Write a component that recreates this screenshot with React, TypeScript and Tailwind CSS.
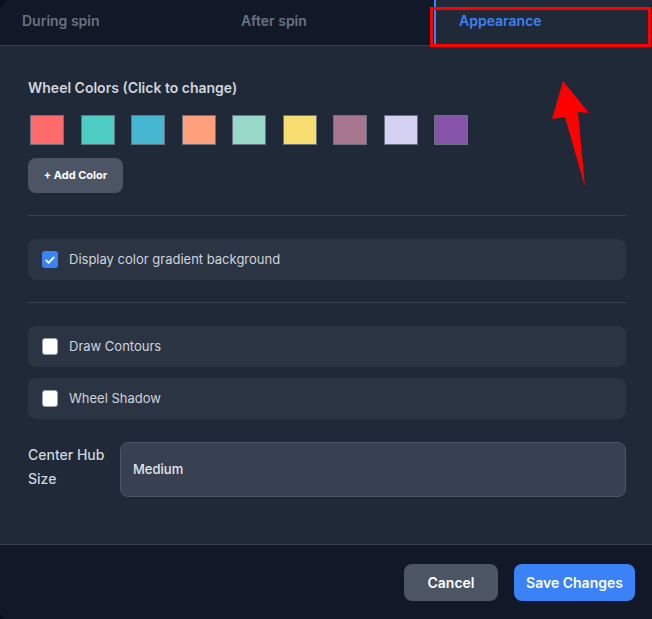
import React, { useState } from "react";

const colors = [
  "#ff6b6b",
  "#4ecdc4",
  "#45b7d1",
  "#ffa07a",
  "#98d8c8",
  "#f7dc6f",
  "#a8758f",
  "#d4d1f2",
  "#8553a8",
];

const CheckRow = ({
  label,
  checked,
  onChange,
}: {
  label: string;
  checked: boolean;
  onChange: () => void;
}) => (
  <label className="flex h-[41px] items-center gap-[11px] rounded-lg bg-[#2b3443] px-[14px] cursor-pointer">
    <span
      onClick={onChange}
      className={`flex h-[17px] w-4 items-center justify-center rounded-[3px] ${
        checked ? "bg-[#3b82f6]" : "bg-white border border-gray-400"
      }`}
    >
      {checked && (
        <svg viewBox="0 0 16 16" className="h-3 w-3" fill="none">
          <path
            d="M3 8.5l3.2 3.2L13 4.5"
            stroke="white"
            strokeWidth="2.4"
            strokeLinecap="round"
            strokeLinejoin="round"
          />
        </svg>
      )}
    </span>
    <span className="text-[13px] text-gray-300">{label}</span>
  </label>
);

const App = () => {
  const [gradient, setGradient] = useState(true);
  const [contours, setContours] = useState(false);
  const [shadow, setShadow] = useState(false);

  return (
    <div
      className="relative h-[619px] w-[652px] overflow-hidden bg-[#0b0f19]"
      style={{ fontFamily: "Inter, 'Noto Sans', sans-serif" }}
    >
      <div className="flex h-full flex-col overflow-hidden rounded-tl-xl rounded-bl-lg bg-[#1f2937]">
        {/* TABS */}
        <div className="flex h-[46px] bg-[#111827] border-b border-[#374151]">
          <button className="w-[217px] pl-[22px] pb-[4px] text-left text-sm font-semibold text-gray-500">
            During spin
          </button>
          <button className="w-[217px] pl-[24px] pb-[4px] text-left text-sm font-semibold text-gray-500">
            After spin
          </button>
          <button className="flex-1 border-l-2 border-[#3b82f6] bg-[#1f2937] pl-[23px] pb-[4px] text-left text-sm font-semibold text-[#3b82f6]">
            Appearance
          </button>
        </div>

        {/* BODY */}
        <div className="flex-1 pl-7 pr-[26px] pt-[32px]">
          <h3 className="text-sm font-semibold text-gray-300">
            Wheel Colors (Click to change)
          </h3>

          <div className="mt-[17px] flex gap-[16.5px] pl-[2px]">
            {colors.map((c) => (
              <div
                key={c}
                className="h-[30px] w-[34px] border border-gray-500 cursor-pointer"
                style={{ backgroundColor: c }}
              />
            ))}
          </div>

          <button className="mt-[13px] h-[35px] w-[95px] rounded-lg bg-[#4b5563] text-[11px] font-bold text-white">
            + Add Color
          </button>

          <div className="mt-[22px] border-t border-[#374151]" />

          <div className="mt-[23px]">
            <CheckRow
              label="Display color gradient background"
              checked={gradient}
              onChange={() => setGradient(!gradient)}
            />
          </div>

          <div className="mt-[22px] border-t border-[#374151]" />

          <div className="mt-[23px] flex flex-col gap-[11px]">
            <CheckRow
              label="Draw Contours"
              checked={contours}
              onChange={() => setContours(!contours)}
            />
            <CheckRow
              label="Wheel Shadow"
              checked={shadow}
              onChange={() => setShadow(!shadow)}
            />
          </div>

          <div className="mt-[23px] flex gap-[12px]">
            <div className="w-[80px] pt-[1px] text-sm font-medium leading-6 text-gray-300">
              Center Hub Size
            </div>
            <div className="flex h-[55px] flex-1 items-center rounded-lg border border-[#4b5563] bg-[#374151] px-3 text-[13px] font-medium text-gray-200">
              Medium
            </div>
          </div>
        </div>

        {/* FOOTER */}
        <div className="flex h-[75px] items-start justify-end gap-4 border-t border-[#374151] bg-[#111827] pr-[17px] pt-[19px]">
          <button className="h-[37px] w-[94px] rounded-lg bg-[#4b5563] text-sm font-semibold text-white">
            Cancel
          </button>
          <button className="h-[37px] w-[121px] rounded-lg bg-[#3b82f6] text-sm font-semibold text-white">
            Save Changes
          </button>
        </div>
      </div>

      {/* ANNOTATIONS */}
      <div className="pointer-events-none absolute left-[430px] top-[7px] h-[40px] w-[221px] border-[3px] border-[#ff0000]" />
      <svg
        className="pointer-events-none absolute left-0 top-0"
        width="652"
        height="619"
      >
        <polygon
          points="563,81 589,113 578,112 585,187 565,117 552,119"
          fill="#ff0000"
        />
      </svg>
    </div>
  );
};

export default App;
